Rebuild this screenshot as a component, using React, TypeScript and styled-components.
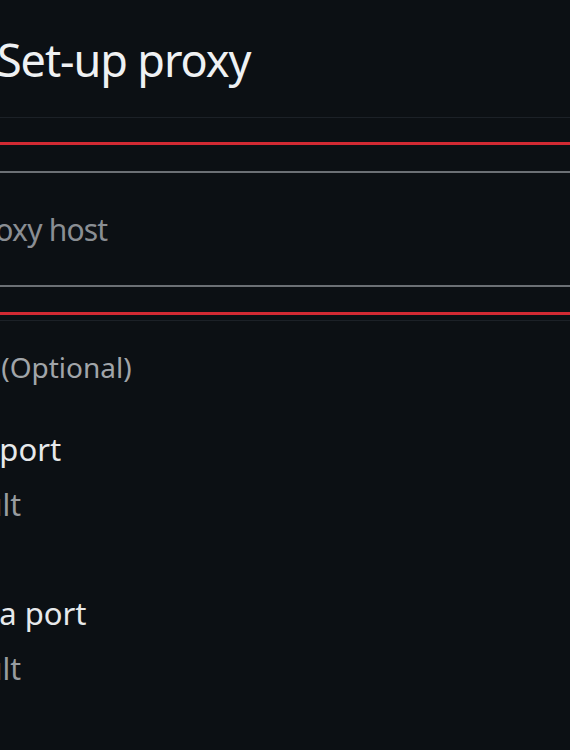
import * as React from 'react';
import styled, { createGlobalStyle } from 'styled-components';

const GlobalStyle = createGlobalStyle`
  html, body {
    margin: 0;
    padding: 0;
    background: #0c1014;
  }
  body {
    font-family: "Noto Sans", "Open Sans", sans-serif;
    overflow: hidden;
  }
`

const Screen = styled.div`
  width: 570px;
  height: 750px;
  overflow: hidden;
  background: #0c1014;
  display: flex;
  flex-direction: column;
`

const Header = styled.header`
  padding: 37px 0 35px 0;
  border-bottom: 1px solid #1c2127;
`

// the screen is cropped on the left, so every text line slides in by its own amount
const Title = styled.h1<{ $shift: number }>`
  margin: 0 0 0 ${props => -props.$shift}px;
  font-size: 45px;
  line-height: 45px;
  font-weight: 400;
  letter-spacing: -1.1px;
  color: #eff1f3;
  white-space: nowrap;
`

const Rail = styled.div<{ $color: string; $size: number; $gap: number }>`
  height: ${props => props.$size}px;
  margin-top: ${props => props.$gap}px;
  background: ${props => props.$color};
  flex-shrink: 0;
`

const InputBox = styled.div`
  height: 112px;
  padding-top: 37px;
  box-sizing: border-box;
`

const Placeholder = styled.div<{ $shift: number }>`
  margin-left: ${props => -props.$shift}px;
  font-size: 30px;
  line-height: 40px;
  letter-spacing: -0.8px;
  color: #8a8e93;
  white-space: nowrap;
`

const Section = styled.div`
  display: flex;
  flex-direction: column;
  padding-top: 28px;
`

const SectionTitle = styled.div<{ $shift: number }>`
  margin-left: ${props => -props.$shift}px;
  font-size: 28px;
  line-height: 36px;
  color: #a1a5a9;
  white-space: nowrap;
`

const SettingList = styled.div`
  display: flex;
  flex-direction: column;
  gap: 66px;
  margin-top: 42px;
`

const SettingRow = styled.div`
  display: flex;
  flex-direction: column;
  gap: 14px;
`

const SettingLabel = styled.div<{ $shift: number }>`
  margin-left: ${props => -props.$shift}px;
  font-size: 31px;
  line-height: 44px;
  color: #e7e9eb;
  white-space: nowrap;
`

const SettingValue = styled.div<{ $shift: number }>`
  margin-left: ${props => -props.$shift}px;
  font-size: 30px;
  line-height: 40px;
  color: #989ca0;
  white-space: nowrap;
`

const settings = [
  { label: 'Proxy port', labelShift: 90, value: 'Default', valueShift: 82 },
  { label: 'Data port', labelShift: 52, value: 'Default', valueShift: 82 },
];

const App = () => {
  return (
    <Screen>
      <GlobalStyle />
      <Header>
        <Title $shift={3}>Set-up proxy</Title>
      </Header>

      <Rail $color="#d22a33" $size={3} $gap={24} />
      <Rail $color="#6c7075" $size={2} $gap={26} />
      <InputBox>
        <Placeholder $shift={33}>Proxy host</Placeholder>
      </InputBox>
      <Rail $color="#6c7075" $size={2} $gap={0} />
      <Rail $color="#d22a33" $size={3} $gap={25} />
      <Rail $color="#1c2127" $size={1} $gap={5} />

      <Section>
        <SectionTitle $shift={75}>Ports (Optional)</SectionTitle>
        <SettingList>
          {settings.map(s => (
            <SettingRow key={s.label}>
              <SettingLabel $shift={s.labelShift}>{s.label}</SettingLabel>
              <SettingValue $shift={s.valueShift}>{s.value}</SettingValue>
            </SettingRow>
          ))}
        </SettingList>
      </Section>
    </Screen>
  );
}

export default App;
